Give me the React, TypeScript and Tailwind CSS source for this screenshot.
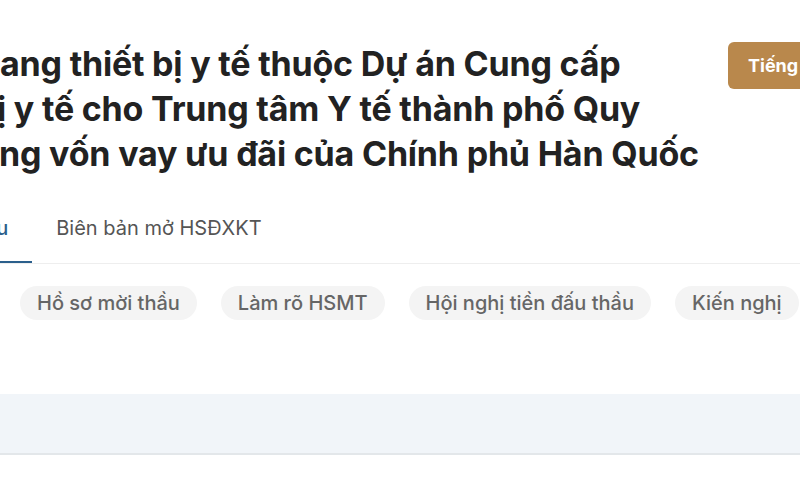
import React from 'react';

const titleLines = [
  { text: 'ang thiết bị y tế thuộc Dự án Cung cấp', cls: 'ml-0' },
  { text: 'ị y tế cho Trung tâm Y tế thành phố Quy', cls: '-ml-[3px]' },
  { text: 'ng vốn vay ưu đãi của Chính phủ Hàn Quốc', cls: '-ml-px' },
];

const tabs = [
  { label: 'Thông tin gói thầu', active: true },
  { label: 'Biên bản mở HSĐXKT', active: false },
];

const docChips = ['Hồ sơ mời thầu', 'Làm rõ HSMT', 'Hội nghị tiền đấu thầu', 'Kiến nghị'];

const App: React.FC = () => {
  return (
    <div className="w-[800px] h-[496px] overflow-hidden bg-white font-['Inter','Liberation_Sans',sans-serif]">
      <div className="flex justify-between items-start pt-[41px]">
        <h1 className="whitespace-nowrap text-[34px] leading-[45px] font-bold text-[#222222] tracking-[-0.2px]">
          {titleLines.map((l) => (
            <span key={l.text} className={`block ${l.cls}`}>{l.text}</span>
          ))}
        </h1>
        <button className="shrink-0 mt-px -mr-[48px] w-[120px] h-[47px] pl-5 text-left rounded-md bg-[#b9884c] text-white text-[18px] font-bold whitespace-nowrap">
          Tiếng Anh
        </button>
      </div>

      <div className="mt-[40px] border-b border-[#eeeeee] overflow-hidden">
        <div className="flex -ml-[189px]">
          {tabs.map((t) => (
            <div
              key={t.label}
              className={`px-6 pb-[21px] text-[20px] leading-[24px] whitespace-nowrap border-b-2 ${
                t.active ? 'border-[#2b5f8c] text-[#2b5f8c] font-medium' : 'border-transparent text-[#555555]'
              }`}
            >
              {t.label}
            </div>
          ))}
        </div>
      </div>

      <div className="flex gap-6 pl-5 mt-[22px] whitespace-nowrap">
        {docChips.map((c) => (
          <span
            key={c}
            className="shrink-0 h-[34px] px-[17px] rounded-full bg-[#f4f4f4] text-[#666666] text-[20px] leading-[34px] font-medium"
          >
            {c}
          </span>
        ))}
      </div>

      <div className="mt-[74px] h-[61px] bg-[#f1f5f9] border-b-2 border-[#e3e7ea]" />
    </div>
  );
};

export default App;
